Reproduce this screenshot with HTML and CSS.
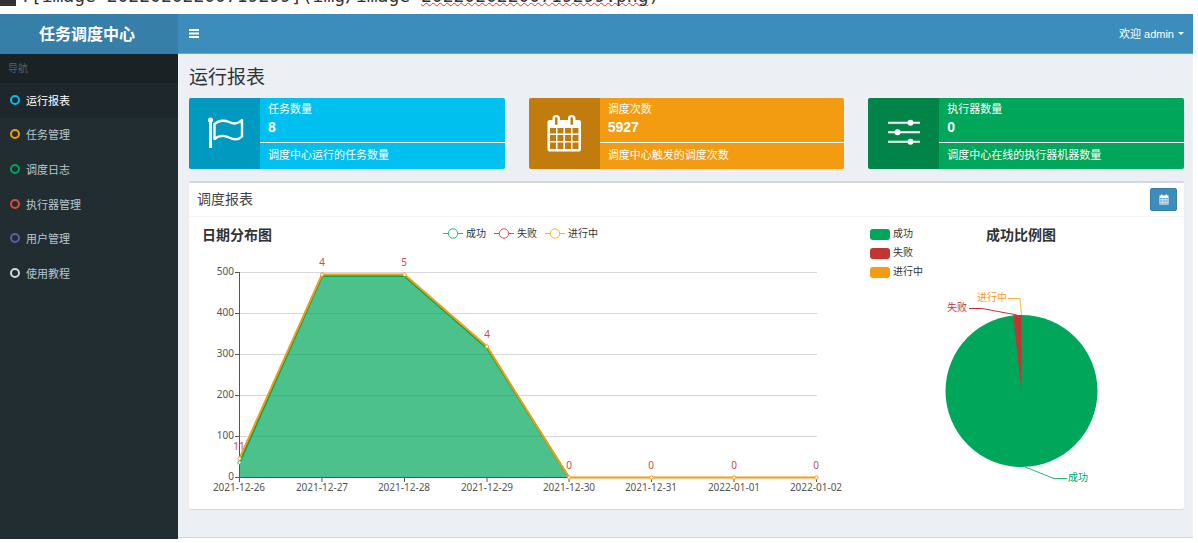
FILE: index.html
```html
<!DOCTYPE html>
<html lang="zh-CN">
<head>
<meta charset="utf-8">
<title>任务调度中心</title>
<link rel="stylesheet" href="styles.css">
</head>
<body>
<div class="source-line"><span class="source-block"></span><code class="source-text">![image-20220202200719299](img/image-<span class="misspelt">20220202200719299.png</span>)</code></div>
<div class="app">
  <aside class="sidebar">
    <a class="logo" href="#">任务调度中心</a>
    <div class="nav-heading">导航</div>
    <nav class="nav">
      <a class="nav-item active" href="#"><span class="ring aqua"></span>运行报表</a>
      <a class="nav-item" href="#"><span class="ring yellow"></span>任务管理</a>
      <a class="nav-item" href="#"><span class="ring green"></span>调度日志</a>
      <a class="nav-item" href="#"><span class="ring red"></span>执行器管理</a>
      <a class="nav-item" href="#"><span class="ring purple"></span>用户管理</a>
      <a class="nav-item" href="#"><span class="ring gray"></span>使用教程</a>
    </nav>
  </aside>
  <div class="page">
    <header class="topbar">
      <button class="toggle" type="button" aria-label="切换导航">
        <svg width="10" height="9" viewBox="0 0 10 9"><path d="M0 1h10M0 4.500h10M0 8h10" stroke="#fff" stroke-width="2"/></svg>
      </button>
      <button class="user" type="button">欢迎 admin <span class="caret"></span></button>
    </header>
    <main class="content">
      <h1 class="title">运行报表</h1>
      <div class="cards">
        <section class="card card-aqua">
          <div class="card-icon">
            <svg width="71" height="71" viewBox="0 0 71 71" fill="none" stroke="#fff"><circle cx="21.500" cy="22" r="2.600" fill="#fff" stroke="none"/><path d="M21.500 22V50" stroke-width="3"/><path d="M25.500 26C30 22 36 22 40 24S49 26 53 22V38.500C49 42.500 44 41.500 40 39.500S30 37 25.500 41Z" stroke-width="2.400" stroke-linejoin="round"/></svg>
          </div>
          <div class="card-body"><div class="card-label">任务数量</div><div class="card-number">8</div><div class="card-rule"></div><div class="card-note">调度中心运行的任务数量</div></div>
        </section>
        <section class="card card-yellow">
          <div class="card-icon">
            <svg width="71" height="71" viewBox="0 0 71 71"><path fill="#fff" fill-rule="evenodd" d="M20.500 22H23.500V20.500Q23.500 17 27.200 17T31 20.500V22H39V20.500Q39 17 42.700 17T46.500 20.500V22H50Q52 22 52 24V51.500Q52 53.500 50 53.500H20.500Q18.500 53.500 18.500 51.500V24Q18.500 22 20.500 22ZM26 20.500V26Q26 27 27.200 27T28.500 26V20.500Q28.500 19.300 27.200 19.300T26 20.500ZM41.500 20.500V26Q41.500 27 42.700 27T44 26V20.500Q44 19.300 42.700 19.300T41.500 20.500ZM21 30V35.500H27V30ZM28.500 30V35.500H34.500V30ZM36 30V35.500H42V30ZM43.500 30V35.500H49.500V30ZM21 37V43H27V37ZM28.500 37V43H34.500V37ZM36 37V43H42V37ZM43.500 37V43H49.500V37ZM21 44.500V51H27V44.500ZM28.500 44.500V51H34.500V44.500ZM36 44.500V51H42V44.500ZM43.500 44.500V51H49.500V44.500Z"/></svg>
          </div>
          <div class="card-body"><div class="card-label">调度次数</div><div class="card-number">5927</div><div class="card-rule"></div><div class="card-note">调度中心触发的调度次数</div></div>
        </section>
        <section class="card card-green">
          <div class="card-icon">
            <svg width="71" height="71" viewBox="0 0 71 71" fill="#fff"><path d="M20 24.700H52M20 34.200H52M20 43.700H52" stroke="#fff" stroke-width="2"/><circle cx="42.500" cy="24.700" r="3"/><circle cx="29.500" cy="34.200" r="3"/><circle cx="42.500" cy="43.700" r="3"/></svg>
          </div>
          <div class="card-body"><div class="card-label">执行器数量</div><div class="card-number">0</div><div class="card-rule"></div><div class="card-note">调度中心在线的执行器机器数量</div></div>
        </section>
      </div>
      <section class="panel">
        <div class="panel-head">
          <h2 class="panel-title">调度报表</h2>
          <button class="date-button" type="button" aria-label="选择日期">
            <svg width="10" height="11" viewBox="0 0 10 11"><path fill="#fff" fill-rule="evenodd" d="M.5 1.500H2V.5H3.500V1.500H6.500V.5H8V1.500H9.500V10.500H.5ZM1.300 4V5.500H2.800V4ZM3.500 4V5.500H4.700V4ZM5.300 4V5.500H6.600V4ZM7.300 4V5.500H8.700V4ZM1.300 6.200V7.700H2.800V6.200ZM3.500 6.200V7.700H4.700V6.200ZM5.300 6.200V7.700H6.600V6.200ZM7.300 6.200V7.700H8.700V6.200ZM1.300 8.400V9.700H2.800V8.400ZM3.500 8.400V9.700H4.700V8.400ZM5.300 8.400V9.700H6.600V8.400ZM7.300 8.400V9.700H8.700V8.400Z"/></svg>
          </button>
        </div>
        <div class="charts">
          <svg class="chart" viewBox="0 0 664 292" role="img" aria-label="日期分布图">
            <text class="chart-title" x="13" y="23">日期分布图</text>
            <g fill="#fff">
              <g stroke="#26b877"><path d="M254 16.500h20"/><circle cx="264" cy="16.500" r="4.700"/></g>
              <g stroke="#d9504c"><path d="M305 16.500h20"/><circle cx="315" cy="16.500" r="4.700"/></g>
              <g stroke="#f9ad37"><path d="M356 16.500h20"/><circle cx="366" cy="16.500" r="4.700"/></g>
            </g>
            <g class="legend-text"><text x="277" y="20">成功</text><text x="328" y="20">失败</text><text x="379" y="20">进行中</text></g>
            <path d="M50 55.500H628M50 96.500H628M50 137.500H628M50 178.500H628M50 219.500H628" stroke="#d8d8d8"/>
            <path d="M50.500 245.500L133 59L215.500 59L298 131L380 260.500H50.500Z" fill="#00a65a" fill-opacity=".7"/>
            <path d="M50.500 55V261M46 55.500h5M46 96.500h5M46 137.500h5M46 178.500h5M46 219.500h5M46 260.500H628M50.500 260v5M133 260v5M215.500 260v5M298 260v5M380 260v5M462.500 260v5M545 260v5M627.500 260v5" stroke="#555" fill="none"/>
            <path d="M50.500 245.500L133 59L215.500 59L298 131L380 260.500" stroke="#00a65a" stroke-width="2" fill="none"/>
            <text class="value" x="50" y="233">11</text>
            <path d="M50.500 241.500L133 57.500H215.500L298 129.500L380 260.500H627.500" stroke="#f39c12" stroke-width="2" fill="none"/>
            <circle cx="50.500" cy="245.500" r="1.700" fill="#fff" stroke="#26b877"/>
            <g fill="#fff" stroke="#f39c12"><circle cx="50.500" cy="241.500" r="1.700"/><circle cx="133" cy="57.500" r="1.700"/><circle cx="215.500" cy="57.500" r="1.700"/><circle cx="298" cy="129.500" r="1.700"/><circle cx="380" cy="260.500" r="1.700"/><circle cx="462.500" cy="260.500" r="1.700"/><circle cx="545" cy="260.500" r="1.700"/><circle cx="627.500" cy="260.500" r="1.700"/></g>
            <g class="value"><text x="133" y="49">4</text><text x="215" y="49">5</text><text x="298" y="121">4</text><text x="380" y="252">0</text><text x="462" y="252">0</text><text x="545" y="252">0</text><text x="627" y="252">0</text></g>
            <g class="axis-y"><text x="45" y="58">500</text><text x="45" y="99">400</text><text x="45" y="140">300</text><text x="45" y="181">200</text><text x="45" y="222">100</text><text x="45" y="263">0</text></g>
            <g class="axis-x"><text x="50" y="274">2021-12-26</text><text x="133" y="274">2021-12-27</text><text x="215" y="274">2021-12-28</text><text x="298" y="274">2021-12-29</text><text x="380" y="274">2021-12-30</text><text x="462" y="274">2021-12-31</text><text x="545" y="274">2022-01-01</text><text x="627" y="274">2022-01-02</text></g>
          </svg>
          <svg class="chart" viewBox="0 0 331 292" role="img" aria-label="成功比例图">
            <rect x="17" y="12" width="20" height="11" rx="3" fill="#00a65a"/>
            <rect x="17" y="31" width="20" height="11" rx="3" fill="#c23632"/>
            <rect x="17" y="50" width="20" height="11" rx="3" fill="#f39c12"/>
            <g class="legend-text"><text x="40" y="20">成功</text><text x="40" y="39">失败</text><text x="40" y="58">进行中</text></g>
            <text class="chart-title" x="133" y="23">成功比例图</text>
            <circle cx="168.500" cy="174" r="76" fill="#00a65a"/>
            <path d="M168.500 174L160.200 98.400A76 76 0 0 1 168.500 98Z" fill="#c23632"/>
            <path d="M164 98L129 91.500H116" stroke="#c23632" fill="none"/>
            <path d="M168.500 98L167 81.500H155" stroke="#f39c12" fill="none" stroke-opacity=".8"/>
            <path d="M172 250L201 261.500H214" stroke="#26b877" fill="none"/>
            <g class="pie-label"><text x="94" y="94" fill="#c23632">失败</text><text x="124" y="84" fill="#f39c12">进行中</text><text x="215" y="264" fill="#00a65a">成功</text></g>
          </svg>
        </div>
      </section>
    </main>
    <footer class="footer"></footer>
  </div>
</div>
</body>
</html>
```
FILE: styles.css
```css
* { box-sizing: border-box; }

body {
  margin: 0;
  min-height: 100vh;
  display: flex;
  flex-direction: column;
  padding: 0 5px 4px 0;
  background: #fff;
  color: #333;
  font-family: "Liberation Sans", "Noto Sans CJK SC", sans-serif;
  font-size: 11px;
}

button { border: 0; padding: 0; font: inherit; cursor: pointer; }
a { text-decoration: none; }

.source-line {
  display: flex;
  align-items: flex-end;
  gap: 4px;
  height: 14px;
  padding-bottom: 8px;
  overflow: hidden;
}
.source-block { width: 16px; height: 16px; background: #333; }
.source-text {
  font: 18px/20px "DejaVu Sans Mono", monospace;
  white-space: pre;
  color: #333;
}
.misspelt { text-decoration: underline wavy #e33 1px; text-underline-offset: 0; text-decoration-skip-ink: none; }

.app { flex: 1; display: flex; }

.sidebar { width: 178px; flex: none; background: #222d32; }
.logo {
  display: flex;
  align-items: center;
  justify-content: center;
  height: 40px;
  padding: 0 4px 2px 0;
  background: #367fa9;
  color: #fff;
  font-size: 16px;
  font-weight: bold;
}
.nav-heading {
  padding: 0 8px;
  background: #1a2226;
  color: #4b646f;
  font-size: 10px;
  line-height: 29px;
}
.nav { display: grid; grid-template-rows: repeat(6, 1fr); height: 208px; }
.nav-item { display: flex; align-items: center; gap: 6px; padding: 0 0 1px 10px; color: #b8c7ce; }
.nav-item.active { background: #1e282c; color: #fff; }
.ring { width: 10px; height: 10px; border: 2px solid; border-radius: 50%; }
.ring.aqua { border-color: #00c0ef; }
.ring.yellow { border-color: #f39c12; }
.ring.green { border-color: #00a65a; }
.ring.red { border-color: #dd4b39; }
.ring.purple { border-color: #605ca8; }
.ring.gray { border-color: #d2d6de; }

.page { flex: 1; min-width: 0; display: flex; flex-direction: column; background: #ecf0f5; }
.topbar {
  display: flex;
  justify-content: space-between;
  height: 40px;
  padding: 0 9px 0 11px;
  background: #3c8dbc;
  border-bottom: 1px solid #6aa8cd;
}
.toggle { display: flex; align-items: center; background: none; }
.user { display: flex; align-items: center; gap: 4px; padding-bottom: 1px; background: none; color: #fff; }
.caret { border: 3px solid transparent; border-top-color: #fff; border-bottom: 0; }

.content { flex: 1; padding: 10px 9px 28px 11px; }
.title { margin: 0 0 6px; font-size: 19px; font-weight: normal; line-height: 28px; }

.cards { display: grid; grid-template-columns: repeat(3, 1fr); gap: 24px; }
.card { display: flex; border-radius: 2px; overflow: hidden; color: #fff; }
.card-aqua { background: #00c0ef; }
.card-yellow { background: #f39c12; }
.card-green { background: #00a65a; }
.card-icon { flex: none; background: rgba(0, 0, 0, .2); }
.card-icon svg { display: block; }
.card-body { flex: 1; padding-top: 2px; }
.card-label, .card-number, .card-note { padding-left: 8px; line-height: 18px; }
.card-number { font-size: 14px; font-weight: bold; }
.card-rule { height: 1px; margin: 6px 0 3px; background: #fff; }

.panel {
  margin-top: 12px;
  border-top: 2px solid #d2d6de;
  border-radius: 2px;
  background: #fff;
  box-shadow: 0 1px 1px rgba(0, 0, 0, .1);
}
.panel-head {
  display: flex;
  align-items: center;
  justify-content: space-between;
  height: 34px;
  padding: 0 7px 0 8px;
  border-bottom: 1px solid #f4f4f4;
}
.panel-title { margin: 0; padding-bottom: 4px; font-size: 14px; font-weight: normal; color: #444; }
.date-button {
  display: grid;
  place-items: center;
  width: 27px;
  height: 23px;
  border: 1px solid #367fa9;
  border-radius: 2px;
  background: #3c8dbc;
}

.charts { display: grid; grid-template-columns: 664fr 331fr; }
.chart { display: block; width: 100%; font-family: "Noto Sans", "Noto Sans CJK SC", sans-serif; font-size: 10px; }
.chart-title { font-size: 14px; font-weight: bold; fill: #333; }
.legend-text { fill: #333; }
.value { fill: #d04a46; text-anchor: middle; }
.axis-y { fill: #555; text-anchor: end; }
.axis-x { fill: #555; text-anchor: middle; }

.footer { border-top: 1px solid #d2d6de; background: #fff; height: 2px; }
```
